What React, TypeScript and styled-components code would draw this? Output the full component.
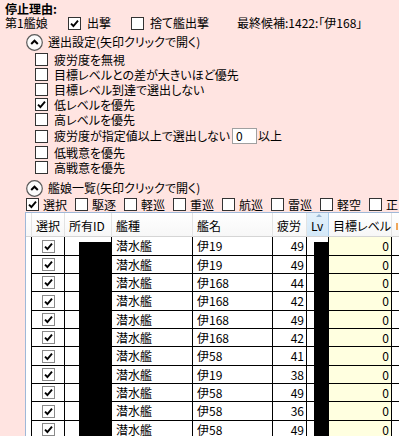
import React from "react";
import styled, { createGlobalStyle } from "styled-components";

const GlobalStyle = createGlobalStyle`
  html, body {
    margin: 0;
    padding: 0;
    background: #ffe4e1;
  }
  body {
    font-family: "Noto Sans CJK JP", "Noto Sans", sans-serif;
    font-size: 12px;
    line-height: 14px;
    color: #000;
    font-feature-settings: "palt" 1;
    overflow: hidden;
  }
`;

const Page = styled.div`
  width: 399px;
  height: 436px;
  overflow: hidden;
  box-sizing: border-box;
  padding: 1px 0 0 5px;
`;

const Title = styled.div`
  height: 15px;
  line-height: 15px;
  font-weight: bold;
`;

const TopRow = styled.div`
  display: flex;
  align-items: center;
  height: 14px;
`;

const Label = styled.span<{ $w?: number }>`
  width: ${(p) => (p.$w ? `${p.$w}px` : "auto")};
  flex: none;
  white-space: nowrap;
`;

const CheckItem = styled.label<{ $w?: number; $gap?: number }>`
  display: flex;
  align-items: center;
  gap: ${(p) => p.$gap ?? 6}px;
  width: ${(p) => (p.$w ? `${p.$w}px` : "auto")};
  flex: none;
  white-space: nowrap;
`;

const Box = styled.span<{ $tone?: string }>`
  display: inline-flex;
  align-items: center;
  justify-content: center;
  width: 13px;
  height: 13px;
  box-sizing: border-box;
  border: 1px solid ${(p) => p.$tone || "#333"};
  background: #fff;
  flex: none;
`;

const SectionHead = styled.div<{ $top: number }>`
  display: flex;
  align-items: center;
  gap: 5px;
  height: 18px;
  margin: ${(p) => p.$top}px 0 0 21px;
  white-space: nowrap;
`;

const Options = styled.div`
  margin: 1px 0 0 30px;
  display: flex;
  flex-direction: column;
`;

const OptionRow = styled.div<{ $h?: number }>`
  display: flex;
  align-items: center;
  height: ${(p) => p.$h ?? 15}px;
  white-space: nowrap;
`;

const NumInput = styled.span`
  display: inline-flex;
  align-items: center;
  width: 25px;
  height: 16px;
  box-sizing: border-box;
  margin: 0 1px 0 2px;
  padding-left: 3px;
  border: 1px solid #a0a0a0;
  background: #fff;
`;

const FilterRow = styled.div`
  display: flex;
  align-items: center;
  height: 15px;
  margin-left: 21px;
`;

const TableWrap = styled.div`
  position: relative;
  margin-left: 20px;
  border-left: 1px solid #9fb8d8;
  border-top: 1px solid #9fb8d8;
  background: #fff;
  width: 420px;
  height: 230px;
  overflow: hidden;
`;

const COLS = "6px 33px 47px 81px 80px 34px 22px 63px 60px";

const HeadRow = styled.div`
  display: grid;
  grid-template-columns: ${COLS};
  height: 24px;
`;

const HeadCell = styled.div<{ $sorted?: boolean }>`
  position: relative;
  display: flex;
  align-items: center;
  box-sizing: border-box;
  padding: 3px 0 0 4px;
  white-space: nowrap;
  overflow: hidden;
  background: ${(p) =>
    p.$sorted ? "linear-gradient(#e4f1fb, #d3e8f8)" : "linear-gradient(#ffffff, #f7f7f7)"};
  border-right: 1px solid ${(p) => (p.$sorted ? "#a9cdec" : "#e3e3e3")};
  border-bottom: 1px solid #d5d5d5;
`;

const SortArrow = styled.span`
  position: absolute;
  top: 1px;
  left: 9px;
  width: 0;
  height: 0;
  border-left: 3px solid transparent;
  border-right: 3px solid transparent;
  border-bottom: 3px solid #98b6d2;
`;

const OrangeMark = styled.span`
  display: inline-block;
  width: 2px;
  height: 7px;
  background: #f0a75a;
`;

const DataRow = styled.div<{ $tall: boolean }>`
  display: grid;
  grid-template-columns: ${COLS};
  height: ${(p) => (p.$tall ? 19 : 18)}px;
`;

const Cell = styled.div<{ $align?: "left" | "right" | "center"; $bg?: string; $head?: boolean }>`
  display: flex;
  align-items: center;
  justify-content: ${(p) =>
    p.$align === "right" ? "flex-end" : p.$align === "center" ? "center" : "flex-start"};
  box-sizing: border-box;
  padding: ${(p) => (p.$align === "right" ? "0 2px 0 0" : p.$align === "center" ? "0" : "0 0 0 4px")};
  background: ${(p) => p.$bg || "#fff"};
  border-right: 1px solid #000;
  border-bottom: ${(p) => (p.$head ? "none" : "1px solid #000")};
  white-space: nowrap;
  overflow: hidden;
`;

const Redact = styled.div<{ $left: number; $w: number }>`
  position: absolute;
  top: 29px;
  left: ${(p) => p.$left}px;
  width: ${(p) => p.$w}px;
  bottom: 0;
  background: #000;
`;

const Check = ({ checked, tone }: { checked?: boolean; tone?: string }) => (
  <Box $tone={tone}>
    {checked && (
      <svg width="11" height="11" viewBox="0 0 11 11">
        <path d="M2 5.6 L4.4 8 L9 2.6" fill="none" stroke="#000" strokeWidth="1.9" />
      </svg>
    )}
  </Box>
);

const Toggle = () => (
  <svg width="17" height="17" viewBox="0 0 17 17">
    <circle cx="8.5" cy="8.5" r="7.8" fill="#fbfbfb" stroke="#5a5a5a" strokeWidth="1.2" />
    <path d="M5.2 10 L8.5 6.7 L11.8 10" fill="none" stroke="#000" strokeWidth="2" />
  </svg>
);

const options: { text: string; checked?: boolean }[] = [
  { text: "疲労度を無視" },
  { text: "目標レベルとの差が大きいほど優先" },
  { text: "目標レベル到達で選出しない" },
  { text: "低レベルを優先", checked: true },
  { text: "高レベルを優先" },
];

const filters = ["選択", "駆逐", "軽巡", "重巡", "航巡", "雷巡", "軽空", "正"];

const ships: [string, number][] = [
  ["伊19", 49],
  ["伊19", 49],
  ["伊168", 44],
  ["伊168", 42],
  ["伊168", 49],
  ["伊168", 42],
  ["伊58", 41],
  ["伊19", 38],
  ["伊58", 49],
  ["伊58", 36],
  ["伊58", 49],
];

export default function App() {
  return (
    <Page>
      <GlobalStyle />
      <Title>停止理由:</Title>
      <TopRow>
        <Label $w={63}>第1艦娘</Label>
        <CheckItem $w={63}>
          <Check checked />
          出撃
        </CheckItem>
        <CheckItem $w={106}>
          <Check />
          捨て艦出撃
        </CheckItem>
        <Label>最終候補:1422:「伊168」</Label>
      </TopRow>

      <SectionHead $top={3}>
        <Toggle />
        選出設定(矢印クリックで開く)
      </SectionHead>
      <Options>
        {options.map((o) => (
          <OptionRow key={o.text}>
            <CheckItem>
              <Check checked={o.checked} />
              {o.text}
            </CheckItem>
          </OptionRow>
        ))}
        <OptionRow $h={18}>
          <CheckItem>
            <Check />
            疲労度が指定値以上で選出しない
          </CheckItem>
          <NumInput>0</NumInput>
          以上
        </OptionRow>
        <OptionRow>
          <CheckItem>
            <Check />
            低戦意を優先
          </CheckItem>
        </OptionRow>
        <OptionRow>
          <CheckItem>
            <Check />
            高戦意を優先
          </CheckItem>
        </OptionRow>
      </Options>

      <SectionHead $top={4}>
        <Toggle />
        艦娘一覧(矢印クリックで開く)
      </SectionHead>
      <FilterRow>
        {filters.map((f, i) => (
          <CheckItem key={f} $w={49} $gap={4}>
            <Check checked={i === 0} />
            {f}
          </CheckItem>
        ))}
      </FilterRow>

      <TableWrap>
        <HeadRow>
          <HeadCell />
          <HeadCell>選択</HeadCell>
          <HeadCell>所有ID</HeadCell>
          <HeadCell>艦種</HeadCell>
          <HeadCell>艦名</HeadCell>
          <HeadCell>疲労</HeadCell>
          <HeadCell $sorted>
            <SortArrow />
            Lv
          </HeadCell>
          <HeadCell>目標レベル</HeadCell>
          <HeadCell>
            <OrangeMark />
          </HeadCell>
        </HeadRow>
        {ships.map(([name, fatigue], i) => (
          <DataRow key={i} $tall={i % 3 === 0}>
            <Cell $head />
            <Cell $align="center">
              <Check checked tone="#8a8a8a" />
            </Cell>
            <Cell />
            <Cell>潜水艦</Cell>
            <Cell>{name}</Cell>
            <Cell $align="right">{fatigue}</Cell>
            <Cell />
            <Cell $align="right" $bg="#ffffe0">
              0
            </Cell>
            <Cell />
          </DataRow>
        ))}
        <Redact $left={53} $w={33} />
        <Redact $left={288} $w={14} />
      </TableWrap>
    </Page>
  );
}
